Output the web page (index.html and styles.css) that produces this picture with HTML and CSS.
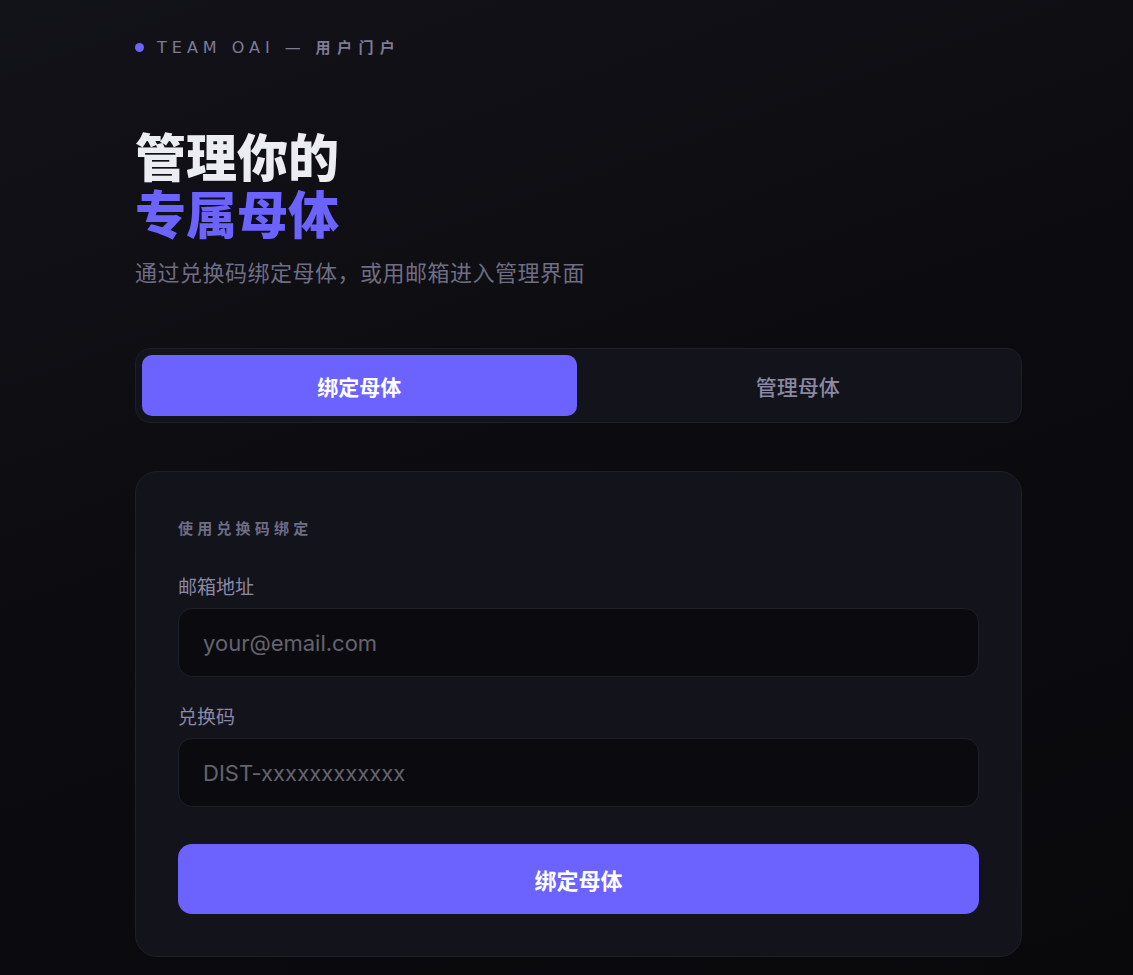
FILE: index.html
```html
<!DOCTYPE html>
<html lang="zh-CN">
<head>
<meta charset="utf-8">
<title>Team OAI — 用户门户</title>
<link rel="stylesheet" href="styles.css">
</head>
<body>
<main class="page">
  <div class="wrap">
    <div class="eyebrow"><span class="dot"></span><span class="eyebrow-text"><span class="eyebrow-latin">TEAM OAI —</span> 用户门户</span></div>

    <h1 class="title"><span class="title-line">管理你的</span><span class="title-line accent">专属母体</span></h1>
    <p class="subtitle">通过兑换码绑定母体，或用邮箱进入管理界面</p>

    <div class="tabs">
      <button class="tab active" type="button">绑定母体</button>
      <button class="tab" type="button">管理母体</button>
    </div>

    <section class="card">
      <h2 class="card-title">使用兑换码绑定</h2>
      <div class="field">
        <label class="label" for="email">邮箱地址</label>
        <input class="input" id="email" type="email" placeholder="your@email.com">
      </div>
      <div class="field">
        <label class="label" for="code">兑换码</label>
        <input class="input" id="code" type="text" placeholder="DIST-xxxxxxxxxxxx">
      </div>
      <button class="submit" type="button">绑定母体</button>
    </section>
  </div>
</main>
</body>
</html>
```

FILE: styles.css
```css
* { box-sizing: border-box; }

html, body {
  margin: 0;
  padding: 0;
}

body {
  min-height: 975px;
  background: linear-gradient(160deg, #121219 0%, #0c0c10 45%, #09090c 100%);
  font-family: "Noto Sans CJK SC", "Noto Sans", sans-serif;
  color: #ececf2;
}

.page {
  padding: 37px 0 18px 135px;
}

.wrap {
  width: 887px;
}

.eyebrow {
  display: flex;
  align-items: center;
  gap: 13px;
  height: 20px;
}

.dot {
  width: 9px;
  height: 9px;
  border-radius: 50%;
  background: #6c63ff;
  flex: none;
}

.eyebrow-text {
  font-family: "Noto Sans CJK SC", sans-serif;
  font-size: 15px;
  font-weight: 700;
  letter-spacing: 6.4px;
  color: #7e7c94;
  line-height: 20px;
}

.eyebrow-latin {
  font-family: "DejaVu Sans", "Liberation Sans", sans-serif;
  font-size: 16px;
  font-weight: 400;
  letter-spacing: 5px;
}

.title {
  margin: 70px 0 0;
  font-size: 51px;
  font-weight: 900;
  line-height: 57px;
  color: #ececf3;
  letter-spacing: 0;
}

.title-line {
  display: block;
}

.accent {
  color: #6c63ff;
}

.subtitle {
  margin: 14px 0 0;
  font-size: 22px;
  line-height: 33px;
  color: #6f6d84;
  letter-spacing: 0.5px;
}

.tabs {
  margin-top: 60px;
  display: grid;
  grid-template-columns: 1fr 1fr;
  gap: 4px;
  padding: 6px;
  height: 75px;
  background: #13131b;
  border: 1px solid #1e1e29;
  border-radius: 15px;
}

.tab {
  border: 0;
  border-radius: 10px;
  background: transparent;
  font-family: "Noto Sans CJK SC", sans-serif;
  font-size: 21px;
  font-weight: 500;
  color: #8a88a2;
  cursor: pointer;
}

.tab.active {
  background: #6c63ff;
  color: #ffffff;
  font-weight: 700;
}

.card {
  margin-top: 48px;
  padding: 45px 42px 42px;
  background: #13131c;
  border: 1px solid #1f1f2a;
  border-radius: 22px;
}

.card-title {
  margin: 0;
  font-size: 15px;
  font-weight: 700;
  line-height: 22px;
  letter-spacing: 4.2px;
  color: #6f6d86;
}

.field {
  display: flex;
  flex-direction: column;
}

.card-title + .field {
  margin-top: 33px;
}

.field + .field {
  margin-top: 25px;
}

.label {
  font-size: 19px;
  font-weight: 400;
  line-height: 28px;
  color: #8b89a3;
  margin-bottom: 8px;
}

.input {
  height: 69px;
  padding: 0 24px;
  background: #0b0b0f;
  border: 1px solid #1f1f2a;
  border-radius: 14px;
  font-family: "Inter", "Liberation Sans", sans-serif;
  font-size: 22px;
  color: #d8d8e0;
  outline: none;
}

.input::placeholder {
  color: #64636f;
}

.submit {
  display: block;
  width: 100%;
  height: 70px;
  margin-top: 37px;
  border: 0;
  border-radius: 14px;
  background: #6c63ff;
  color: #ffffff;
  font-family: "Noto Sans CJK SC", sans-serif;
  font-size: 22px;
  font-weight: 700;
  cursor: pointer;
}
```
